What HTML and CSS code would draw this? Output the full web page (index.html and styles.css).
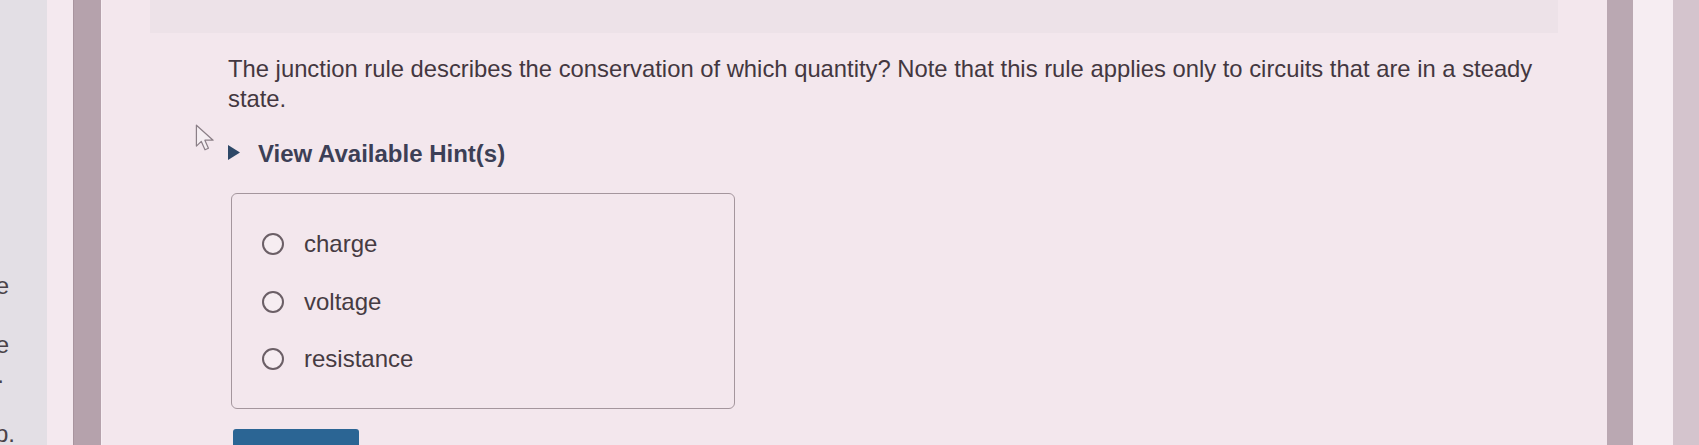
FILE: index.html
```html
<!DOCTYPE html>
<html lang="en">
<head>
<meta charset="utf-8">
<title>Junction rule question</title>
<link rel="stylesheet" href="styles.css">
</head>
<body>
  <div class="side-strip">
    <div class="side-line w9"><span>the</span></div>
    <div class="side-line"></div>
    <div class="side-line w9"><span>are</span></div>
    <div class="side-line w4"><span>state.</span></div>
    <div class="side-line"></div>
    <div class="side-line w15"><span>step.</span></div>
  </div>
  <div class="gap-strip"></div>
  <div class="dark-band"></div>
  <main class="main">
    <div class="top-bar"></div>
    <div class="content">
      <p class="question">The junction rule describes the conservation of which quantity? Note that this rule applies only to circuits that are in a steady state.</p>
      <div class="hint">
        <svg class="hint-caret" width="12" height="15" viewBox="0 0 12 15"><polygon points="0,0 12,7.5 0,15"/></svg>
        <span>View Available Hint(s)</span>
      </div>
      <div class="choices">
        <label class="choice"><span class="radio"></span><span class="choice-text">charge</span></label>
        <label class="choice"><span class="radio"></span><span class="choice-text">voltage</span></label>
        <label class="choice"><span class="radio"></span><span class="choice-text">resistance</span></label>
      </div>
      <button class="submit" type="button">Submit</button>
    </div>
  </main>
  <div class="right-dark"></div>
  <div class="right-light"></div>
  <div class="right-edge"></div>
  <svg class="cursor" width="20" height="27" viewBox="0 0 16 22">
    <path d="M1 1 L1 18 L5 14.2 L8 21 L10.8 19.8 L7.9 13.2 L14.6 13.2 Z"/>
  </svg>
</body>
</html>
```
FILE: styles.css
```css
html, body {
  margin: 0;
  padding: 0;
}
body {
  position: relative;
  display: flex;
  height: 445px;
  overflow: hidden;
  background: #f3e7ed;
  font-family: "Liberation Sans", Arial, sans-serif;
}
.side-strip {
  width: 47px;
  flex: none;
  background: #e3dfe5;
  overflow: hidden;
  padding-top: 271px;
  box-sizing: border-box;
  font-size: 24px;
  line-height: 29.6px;
  color: #4a4248;
}
.side-line {
  height: 29.6px;
  display: flex;
  justify-content: flex-end;
  white-space: nowrap;
  width: 0;
}
.side-line.w9 { width: 9px; }
.side-line.w4 { width: 4px; }
.side-line.w15 { width: 15px; }
.side-line span { flex: none; }
.gap-strip {
  width: 26px;
  flex: none;
  background: #f4e9ef;
}
.dark-band {
  width: 27px;
  flex: none;
  background: #b5a2ac;
  border-left: 1px solid #a8949e;
  border-right: 1px solid #f7eef3;
}
.main {
  flex: 1;
  min-width: 0;
}
.top-bar {
  height: 33px;
  margin: 0 49px 0 48px;
  background: #ede2e8;
}
.content {
  padding-left: 126px;
  width: 1332px;
}
.question {
  margin: 21px 0 0;
  font-size: 23.8px;
  line-height: 30px;
  color: #433740;
}
.hint {
  margin-top: 25px;
  height: 30px;
  display: flex;
  align-items: center;
  gap: 18px;
  font-size: 24px;
  line-height: 30px;
  font-weight: bold;
  color: #3c3f56;
}
.hint-caret {
  fill: #2d4867;
  margin-top: -3px;
}
.choices {
  margin: 24px 0 0 3px;
  width: 504px;
  box-sizing: border-box;
  border: 1px solid #a4969d;
  border-radius: 6px;
  padding: 35px 0 34px 30px;
  display: flex;
  flex-direction: column;
  gap: 27.5px;
}
.choice {
  display: flex;
  align-items: center;
  height: 30px;
  gap: 20px;
  font-size: 24px;
  line-height: 30px;
  color: #463b42;
}
.radio {
  width: 22px;
  height: 22px;
  box-sizing: border-box;
  border: 2.5px solid #6b5f66;
  border-radius: 50%;
  background: #f6edf1;
  flex: none;
}
.submit {
  display: block;
  margin: 20px 0 0 5px;
  width: 126px;
  height: 42px;
  border: none;
  border-radius: 3px;
  background: #2b6594;
  color: #eef2f7;
  font-family: "Liberation Sans", Arial, sans-serif;
  font-size: 18px;
  font-weight: bold;
  padding: 11px 0 0;
  line-height: 22px;
  text-align: center;
  vertical-align: top;
}
.right-dark {
  width: 26px;
  flex: none;
  background: #baa8b2;
}
.right-light {
  width: 40px;
  flex: none;
  background: #f6edf2;
}
.right-edge {
  width: 26px;
  flex: none;
  background: #d4c4cd;
}
.cursor {
  position: absolute;
  left: 195px;
  top: 124px;
}
.cursor path {
  fill: #f5eef2;
  stroke: #8b7f87;
  stroke-width: 1;
  stroke-linejoin: round;
}
```
